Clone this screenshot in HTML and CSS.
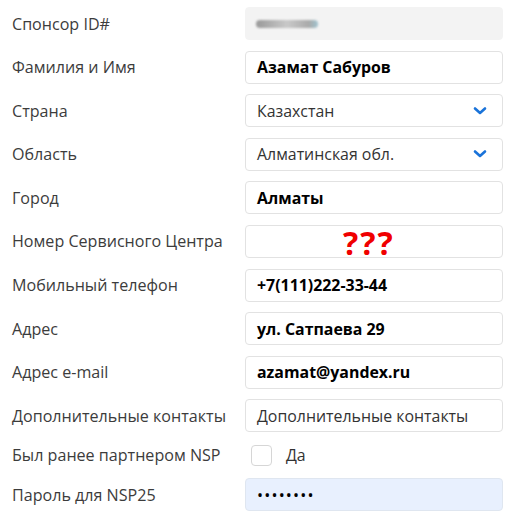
FILE: index.html
```html
<!DOCTYPE html>
<html>
<head>
<meta charset="utf-8">
<link rel="stylesheet" href="styles.css">
</head>
<body>
<form class="form">
  <div class="row">
    <label class="label">Спонсор ID#</label>
    <div class="field field-readonly"><span class="blur"></span></div>
  </div>
  <div class="row">
    <label class="label">Фамилия и Имя</label>
    <div class="field"><span class="value">Азамат Сабуров</span></div>
  </div>
  <div class="row">
    <label class="label">Страна</label>
    <div class="field select"><span class="text">Казахстан</span>
      <svg class="chev" width="14" height="10" viewBox="0 0 14 10"><path d="M2 2.5 L7 7 L12 2.5" fill="none" stroke="#1a73d9" stroke-width="2.6" stroke-linecap="round" stroke-linejoin="round"/></svg>
    </div>
  </div>
  <div class="row">
    <label class="label">Область</label>
    <div class="field select"><span class="text">Алматинская обл.</span>
      <svg class="chev" width="14" height="10" viewBox="0 0 14 10"><path d="M2 2.5 L7 7 L12 2.5" fill="none" stroke="#1a73d9" stroke-width="2.6" stroke-linecap="round" stroke-linejoin="round"/></svg>
    </div>
  </div>
  <div class="row">
    <label class="label">Город</label>
    <div class="field"><span class="value">Алматы</span></div>
  </div>
  <div class="row">
    <label class="label">Номер Сервисного Центра</label>
    <div class="field field-qq"><span class="qq">???</span></div>
  </div>
  <div class="row">
    <label class="label">Мобильный телефон</label>
    <div class="field"><span class="value">+7(111)222-33-44</span></div>
  </div>
  <div class="row">
    <label class="label">Адрес</label>
    <div class="field"><span class="value">ул. Сатпаева 29</span></div>
  </div>
  <div class="row">
    <label class="label">Адрес e-mail</label>
    <div class="field"><span class="value">azamat@yandex.ru</span></div>
  </div>
  <div class="row">
    <label class="label">Дополнительные контакты</label>
    <div class="field"><span class="text">Дополнительные контакты</span></div>
  </div>
  <div class="row row-check">
    <label class="label">Был ранее партнером NSP</label>
    <div class="check-wrap"><span class="checkbox"></span><span class="text">Да</span></div>
  </div>
  <div class="row">
    <label class="label">Пароль для NSP25</label>
    <div class="field field-autofill"><span class="dots">••••••••</span></div>
  </div>
</form>
</body>
</html>
```
FILE: styles.css
```css
html, body {
  margin: 0;
  padding: 0;
  background: #ffffff;
}
body {
  font-family: "Open Sans", "Noto Sans", sans-serif;
  font-size: 15.9px;
  color: #333;
}
.form {
  display: flex;
  flex-direction: column;
  gap: 10.6px;
  padding: 7px 9px 0 12px;
}
.row {
  display: flex;
  align-items: center;
  height: 33px;
}
.row-check {
  height: 24.8px;
}
.label {
  width: 233px;
  flex: none;
  font-size: 16.1px;
  color: #3c3c3c;
  white-space: nowrap;
}
.field {
  box-sizing: border-box;
  width: 258px;
  height: 33px;
  border: 1px solid #e2e2e2;
  border-radius: 4px;
  display: flex;
  align-items: center;
  padding: 0 11px;
  background: #fff;
  white-space: nowrap;
}
.field-readonly {
  background: #f3f3f3;
  border-color: #f3f3f3;
}
.blur {
  display: block;
  width: 62px;
  height: 8px;
  border-radius: 4px;
  background: linear-gradient(90deg, #999 0%, #c9c9c9 50%, #aaa 85%, #9fc3cf 100%);
  filter: blur(1px);
  margin-left: -1px;
}
.value {
  font-weight: 700;
  color: #000;
}
.text {
  color: #333;
}
.select {
  justify-content: space-between;
}
.chev {
  margin-right: 4px;
}
.field-qq {
  padding-left: 97px;
}
.qq {
  color: #f00000;
  font-weight: 700;
  font-size: 32px;
  line-height: 1;
  margin-top: 3px;
  letter-spacing: 2px;
}
.check-wrap {
  display: flex;
  align-items: center;
  gap: 14px;
  padding-left: 6px;
}
.checkbox {
  box-sizing: border-box;
  width: 21px;
  height: 21px;
  border: 1px solid #d6d6d6;
  border-radius: 4px;
  background: #fff;
}
.field-autofill {
  background: #e8f0fe;
  border-color: #dfe6f0;
}
.dots {
  color: #000;
  font-size: 16px;
  letter-spacing: 1.2px;
}
```
